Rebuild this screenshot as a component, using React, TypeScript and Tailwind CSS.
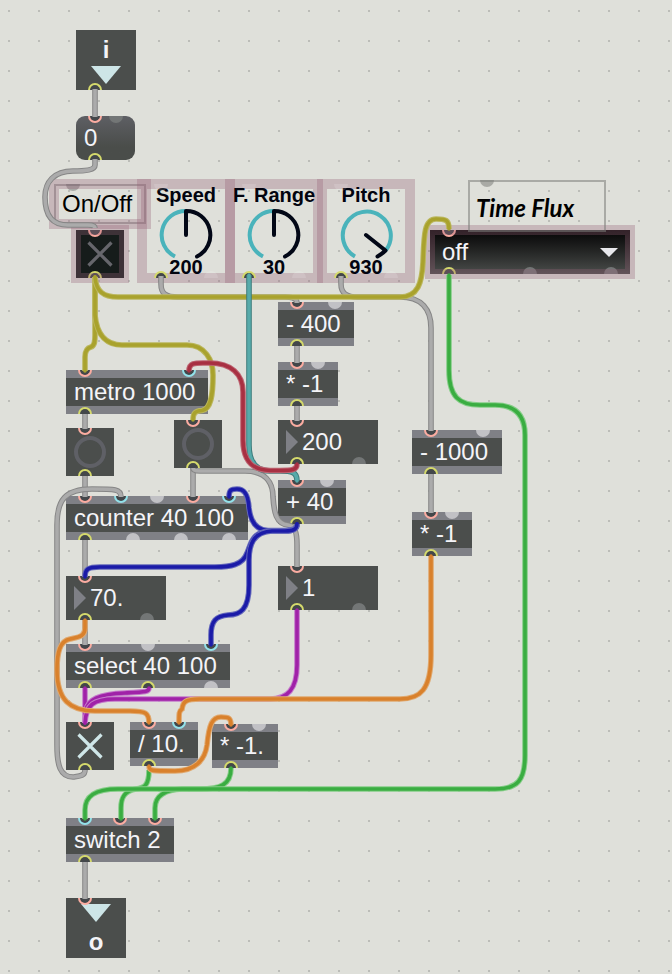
import React from 'react';

type PortKind = 'hot' | 'cold' | 'out' | 'idle' | 'dim' | 'faint';
type Port = [number, PortKind];

const tone: Record<PortKind, string> = {
  hot: 'border-2 border-[#fbaca1] bg-[#43474a]',
  cold: 'border-2 border-[#93e2ea] bg-[#43474a]',
  out: 'border-2 border-[#d5da6c] bg-[#43474a]',
  idle: 'bg-[#c1c1c5]',
  dim: 'bg-[#737676]',
  faint: 'bg-white/15',
};

function Ports({ inlets = [], outlets = [] }: { inlets?: Port[]; outlets?: Port[] }) {
  return (
    <>
      {inlets.map(([x, kind]) => (
        <span
          key={'i' + x}
          className={'pointer-events-none absolute top-0 h-[7px] w-[14px] -translate-x-1/2 rounded-b-full border-t-0 ' + tone[kind]}
          style={{ left: x }}
        />
      ))}
      {outlets.map(([x, kind]) => (
        <span
          key={'o' + x}
          className={'pointer-events-none absolute bottom-0 h-[7px] w-[14px] -translate-x-1/2 rounded-t-full border-b-0 ' + tone[kind]}
          style={{ left: x }}
        />
      ))}
    </>
  );
}

interface BoxProps {
  place: string;
  inlets?: Port[];
  outlets?: Port[];
}

function ObjectBox({ place, inlets, outlets, children }: BoxProps & { children: React.ReactNode }) {
  return (
    <div className={'absolute border-y-8 border-[#7f8086] bg-[#4b4e4c] px-2 text-2xl leading-7 whitespace-nowrap text-[#f4f4f8] ' + place}>
      {children}
      <span className="absolute inset-x-0 -inset-y-2">
        <Ports inlets={inlets} outlets={outlets} />
      </span>
    </div>
  );
}

function NumberBox({ place, value, label }: { place: string; value: string; label: string }) {
  return (
    <div className={'absolute flex h-11 w-[100px] items-center bg-[#4b4e4c] pl-2 ' + place}>
      <svg className="h-6 w-3 shrink-0" viewBox="0 0 12 24" aria-hidden="true">
        <path d="M0 0L12 12L0 24Z" fill="#7f8086" />
      </svg>
      <input
        aria-label={label}
        defaultValue={value}
        className="h-7 w-full min-w-0 bg-transparent pl-1 text-2xl leading-7 text-[#f4f4f8] outline-none"
      />
      <Ports inlets={[[19, 'hot']]} outlets={[[19, 'out'], [81, 'dim']]} />
    </div>
  );
}

function Bang({ place, label }: { place: string; label: string }) {
  return (
    <button type="button" aria-label={label} className={'absolute flex size-12 items-center justify-center bg-[#4b4e4c] ' + place}>
      <span className="size-8 rounded-full border-4 border-[#5f6066]" />
      <Ports inlets={[[19, 'hot']]} outlets={[[19, 'out']]} />
    </button>
  );
}

function Toggle({ place, fill, cross, label, on }: { place: string; fill: string; cross: string; label: string; on?: boolean }) {
  return (
    <div className={'absolute flex size-12 items-center justify-center ' + place}>
      <input type="checkbox" aria-label={label} defaultChecked={on} className={'absolute inset-0 size-full appearance-none ' + fill} />
      <svg className="pointer-events-none relative size-6 overflow-visible" viewBox="0 0 24 24" aria-hidden="true">
        <path d="M0.500 0.500L23.500 23.500M23.500 0.500L0.500 23.500" stroke={cross} strokeWidth="3.2" />
      </svg>
      <Ports inlets={[[19, 'hot']]} outlets={[[19, 'out']]} />
    </div>
  );
}

function Highlight() {
  return <span className="pointer-events-none absolute -inset-[5px] border-[10px] border-[#965f76]/32" />;
}

interface DialProps {
  place: string;
  label: string;
  value: number;
  max: number;
  teal: string;
  dark: string;
}

function Dial({ place, label, value, max, teal, dark }: DialProps) {
  return (
    <label className={'absolute flex h-[94px] w-[88px] flex-col items-center pt-px text-xl leading-5 font-bold whitespace-nowrap text-[#02040f] ' + place}>
      <Highlight />
      <span className="relative">{label}</span>
      <svg className="relative h-[52px] w-[52px] overflow-visible" viewBox="0 0 52 52" fill="none" strokeWidth="4" aria-hidden="true">
        <path d={teal} stroke="#4ab3bb" />
        <path d={dark} stroke="#020716" strokeLinecap="round" strokeLinejoin="round" />
      </svg>
      <span className="relative">{value}</span>
      <input type="range" max={max} defaultValue={value} className="absolute inset-0 size-full opacity-0" />
      <Ports inlets={[[19, 'faint']]} outlets={[[19, 'out'], [69, 'faint']]} />
    </label>
  );
}

type CordTone = 'gray' | 'olive' | 'teal' | 'red' | 'blue' | 'purple' | 'orange' | 'green';

const cordColors: Record<CordTone, [string, string]> = {
  gray: ['#868686', '#ababab'],
  olive: ['#bbb75e', '#a9a22d'],
  teal: ['#3d7d7c', '#57aaaa'],
  red: ['#bd6572', '#a83042'],
  blue: ['#6468bb', '#1b1ba8'],
  purple: ['#c47bca', '#a022a8'],
  orange: ['#e0a970', '#d9812c'],
  green: ['#85cd87', '#3aad41'],
};

const cords: [CordTone, string][] = [
  ['gray', 'M95 89V117'],
  ['gray', 'M95 159V165C95 170 86 171 73 171C54 171 45 182 45 197C45 218 54 225 68 225H88Q95 225 95 228'],
  ['gray', 'M161 276V284C161 293 165 297 178 297H285Q297 297 297 303'],
  ['gray', 'M341 276V284C341 293 346 297 358 297H400C422 297 431 310 431 328V431'],
  ['gray', 'M297 346V363'],
  ['gray', 'M297 406V421'],
  ['gray', 'M431 474V513'],
  ['gray', 'M85 414V429'],
  ['gray', 'M85 476V497'],
  ['gray', 'M85 540V577'],
  ['gray', 'M85 620V645'],
  ['gray', 'M85 862V899'],
  ['gray', 'M193 468V497'],
  ['gray', 'M193 468Q193 471 200 471H245C265 471 273 482 273 497C274 512 276 524 288 525C295 526 297 532 297 545V567'],
  ['gray', 'M85 770C85 776 80 776 73 777C60 777 57 765 57 745V525C57 500 65 489 92 489C115 489 121 489 121 497'],
  ['olive', 'M95 277V335C95 343 94 346 91 347C87 348 85 351 85 357V371'],
  ['olive', 'M95 277V315C97 337 108 345 122 345H187C205 345 213 360 213 375C213 395 211 409 202 410.500C195 411 193 413 193 420'],
  ['olive', 'M95 277C96 292 104 297 118 297H400C418 297 422 283 423 262C424 235 424 219 436 219C446 219 449 220 449 229'],
  ['teal', 'M249 275V445C249 463 257 471 270 471H280C292 471 297 472 297 481'],
  ['red', 'M189 371C189 362 196 363 207 363C232 362 243 375 243 392V440C243 463 254 470 270 470.500H280C292 470.500 297 470 297 464'],
  ['blue', 'M297 524C297 530 292 530 285 530.500H268C253 530 250 517 249 508C248 492 243 489 237 489C231 489 229 490 229 497'],
  ['blue', 'M297 524C297 530 292 531 285 531H270C251 532 251 545 247 553C243 565 230 567 215 567H100C88 567 85 569 85 577'],
  ['blue', 'M297 524C297 530 292 531 285 531H272C253 532 249 545 249 560V585C249 610 240 615 228 615C216 616 211 621 211 635V645'],
  ['purple', 'M85 688V723'],
  ['purple', 'M149 688C149 692 146 692 125 693C98 694 88 700 86 710'],
  ['purple', 'M297 610V665C297 690 287 699 270 699H115C93 699 86 705 85 723'],
  ['orange', 'M85 620V628C85 637 78 637 70 639C60 641 57 652 57 670C57 700 70 711 95 711H130C146 711 149 713 149 723'],
  ['orange', 'M431 556V655C431 690 420 699 400 699H200C185 699 183 702 182 709C179 711 179 713 179 723'],
  ['green', 'M149 770C149 786 144 788 136 789C124 791 121 798 121 808V819'],
  ['green', 'M231 768C231 785 220 789 200 789H182C161 790 155 798 155 808V819'],
  ['green', 'M449 275V370C449 397 459 405 480 405H495C518 405 525 418 525 435V755C525 780 518 789 495 789H118C95 789 85 796 85 810V819'],
  ['orange', 'M149 766C149 771 152 771 175 771C195 771 205 760 207 745C209 725 212 717 221 717C229 717 231 718 231 725'],
];

function PatchCords() {
  return (
    <svg className="pointer-events-none absolute top-0 left-0 h-[974px] w-[672px]" viewBox="0 0 672 974" fill="none" aria-hidden="true">
      {cords.map(([color, d]) => (
        <g key={d}>
          <path d={d} stroke={cordColors[color][0]} strokeWidth="5.6" />
          <path d={d} stroke={cordColors[color][1]} strokeWidth="3.6" strokeLinecap={color === 'gray' ? 'butt' : 'round'} />
        </g>
      ))}
    </svg>
  );
}

const halfTeal = 'M15 51.500A24 24 0 0 1 26 6';
const halfDark = 'M26 30V6A24 24 0 0 1 37 51.500';

export default function App() {
  return (
    <main className="relative min-h-screen w-full overflow-hidden bg-[#dfe0da] font-['Liberation_Sans',Arial,sans-serif]">
      <svg className="absolute inset-0 size-full" aria-hidden="true">
        <pattern id="grid" x="8" y="10" width="30" height="30" patternUnits="userSpaceOnUse">
          <rect width="2" height="2" fill="#bcbdb8" />
        </pattern>
        <rect width="100%" height="100%" fill="url(#grid)" />
      </svg>

      <div className="absolute top-[30px] left-[76px] flex size-[60px] flex-col items-center bg-[#4b4e4c] pt-2 text-2xl leading-6 font-bold text-[#f4f4f8]">
        <span>i</span>
        <svg className="mt-1 h-[18px] w-[30px]" viewBox="0 0 30 18" aria-hidden="true">
          <path d="M0 0H30L15 18Z" fill="#cde5e7" />
        </svg>
        <Ports outlets={[[19, 'out']]} />
      </div>

      <button type="button" className="absolute top-[116px] left-[76px] h-11 w-[59px] rounded-[9px] bg-linear-to-b from-[#5e5f64] to-[#4a4d4a] to-70% px-2 text-left text-2xl leading-7 text-[#f4f4f8]">
        0
        <Ports inlets={[[19, 'hot'], [40, 'dim']]} outlets={[[19, 'out']]} />
      </button>

      <div className="absolute top-[184px] left-[54px] h-10 w-[92px] border-2 border-[#666]/45 px-1.5 pt-1 text-2xl leading-7 text-black">
        On/Off
        <span className="absolute -top-0.5 left-[10px] h-[7px] w-[14px] rounded-b-full bg-[#666]/45" />
        <span className="absolute -inset-[7px] border-[10px] border-[#965f76]/32" />
      </div>

      <Toggle place="top-[230px] left-[76px]" fill="bg-[#161c1b]" cross="#66666c" label="On/Off" />
      <span className="pointer-events-none absolute top-[225px] left-[71px] size-[58px] border-[10px] border-[#965f76]/32" />

      <Dial place="top-[184px] left-[142px]" label="Speed" value={200} max={400} teal={halfTeal} dark={halfDark} />
      <Dial place="top-[184px] left-[230px]" label="F. Range" value={30} max={60} teal={halfTeal} dark={halfDark} />
      <Dial place="top-[184px] left-[322px]" label="Pitch" value={930} max={1000} teal="M15 51.500A24 24 0 1 1 46 45" dark="M26 30L45.500 45.500Q42 49 37.500 51.500" />

      <div className="absolute top-[230px] left-[430px] h-11 w-[200px]">
        <select aria-label="Time Flux" className="size-full appearance-none bg-linear-to-b from-[#060606] to-[#4b4e4c] px-3 text-2xl leading-7 text-[#f4f4f8]">
          <option>off</option>
        </select>
        <svg className="pointer-events-none absolute top-[18px] right-3 h-[9px] w-[18px]" viewBox="0 0 18 9" aria-hidden="true">
          <path d="M0 0H18L9 9Z" fill="#e8e8ec" />
        </svg>
        <Ports inlets={[[19, 'hot']]} outlets={[[19, 'out'], [100, 'dim'], [181, 'dim']]} />
        <Highlight />
      </div>

      <div className="absolute top-[180px] left-[468px] h-[52px] w-[138px] border-2 border-[#7c7d7a]/55 px-1.5 pt-3 font-['Lato',sans-serif] text-2xl leading-7 font-bold text-black italic">
        Time Flux
        <span className="absolute -top-0.5 left-[10px] h-[7px] w-[14px] rounded-b-full bg-[#7c7d7a]/55" />
      </div>

      <ObjectBox place="top-[370px] left-[66px] w-[142px]" inlets={[[19, 'hot'], [123, 'cold']]} outlets={[[19, 'out']]}>metro 1000</ObjectBox>
      <Bang place="top-[428px] left-[66px]" label="Metro bang" />
      <Bang place="top-[420px] left-[174px]" label="Reset bang" />
      <ObjectBox
        place="top-[496px] left-[66px] w-[182px]"
        inlets={[[19, 'hot'], [55, 'cold'], [91, 'idle'], [127, 'hot'], [163, 'cold']]}
        outlets={[[19, 'out'], [67, 'idle'], [115, 'idle'], [163, 'idle']]}
      >
        counter 40 100
      </ObjectBox>
      <NumberBox place="top-[576px] left-[66px]" value="70." label="Counter value" />
      <ObjectBox
        place="top-[644px] left-[66px] w-[164px]"
        inlets={[[19, 'hot'], [82, 'idle'], [145, 'cold']]}
        outlets={[[19, 'out'], [82, 'out'], [145, 'idle']]}
      >
        select 40 100
      </ObjectBox>
      <Toggle place="top-[722px] left-[66px]" fill="bg-[#4b4e4c]" cross="#cfe6e8" label="Direction" on />
      <ObjectBox place="top-[722px] left-[130px] w-[68px]" inlets={[[19, 'hot'], [49, 'cold']]} outlets={[[19, 'out']]}>/ 10.</ObjectBox>
      <ObjectBox place="top-[724px] left-[212px] w-[66px]" inlets={[[19, 'hot'], [47, 'idle']]} outlets={[[19, 'out']]}>* -1.</ObjectBox>
      <ObjectBox place="top-[818px] left-[66px] w-[108px]" inlets={[[19, 'cold'], [54, 'hot'], [89, 'hot']]} outlets={[[19, 'out']]}>switch 2</ObjectBox>

      <ObjectBox place="top-[302px] left-[278px] w-[76px]" inlets={[[19, 'hot'], [57, 'idle']]} outlets={[[19, 'out']]}>- 400</ObjectBox>
      <ObjectBox place="top-[362px] left-[278px] w-[60px]" inlets={[[19, 'hot'], [40, 'idle']]} outlets={[[19, 'out']]}>* -1</ObjectBox>
      <NumberBox place="top-[420px] left-[278px]" value="200" label="Interval" />
      <ObjectBox place="top-[480px] left-[278px] w-[68px]" inlets={[[19, 'hot'], [49, 'idle']]} outlets={[[19, 'out']]}>+ 40</ObjectBox>
      <NumberBox place="top-[566px] left-[278px]" value="1" label="State" />

      <ObjectBox place="top-[430px] left-[412px] w-[90px]" inlets={[[19, 'hot'], [71, 'idle']]} outlets={[[19, 'out']]}>- 1000</ObjectBox>
      <ObjectBox place="top-[512px] left-[412px] w-[60px]" inlets={[[19, 'hot'], [40, 'idle']]} outlets={[[19, 'out']]}>* -1</ObjectBox>

      <div className="absolute top-[898px] left-[66px] flex size-[60px] flex-col items-center bg-[#4b4e4c] pt-1.5 text-2xl leading-6 font-bold text-[#f4f4f8]">
        <svg className="mb-2 h-[18px] w-[30px] shrink-0" viewBox="0 0 30 18" aria-hidden="true">
          <path d="M0 0H30L15 18Z" fill="#cde5e7" />
        </svg>
        <span>o</span>
        <Ports inlets={[[19, 'hot']]} />
      </div>

      <PatchCords />
    </main>
  );
}
